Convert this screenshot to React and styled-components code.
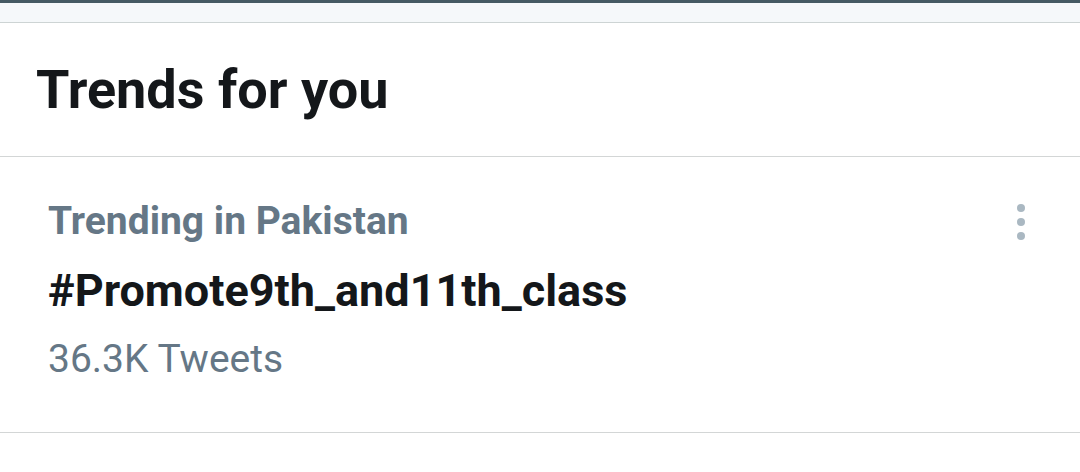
import React from "react";
import styled, { createGlobalStyle } from "styled-components";

const Global = createGlobalStyle`
  html, body { margin: 0; padding: 0; background: #ffffff; }
  body { font-family: Roboto, "Noto Sans", sans-serif; -webkit-font-smoothing: antialiased; }
`;

const Page = styled.div`
  width: 1080px;
  height: 472px;
  background: #ffffff;
  overflow: hidden;
`;

const TopStrip = styled.div`
  height: 19px;
  background: #f5f8fa;
  border-top: 3px solid #455a63;
  border-bottom: 1px solid #cdd4d4;
`;

const Header = styled.div`
  height: 133px;
  display: flex;
  align-items: center;
  padding-left: 36px;
  border-bottom: 1px solid #d3d6d6;
`;

const Title = styled.h2`
  margin: 0;
  font-size: 54px;
  font-weight: 700;
  color: #14171a;
  line-height: 1;
`;

const TrendRow = styled.div`
  height: 275px;
  display: flex;
  justify-content: space-between;
  padding: 0 48px;
  border-bottom: 1px solid #d3d6d6;
`;

const TrendText = styled.div`
  display: flex;
  flex-direction: column;
  padding-top: 42px;
`;

const Context = styled.div`
  font-size: 39px;
  font-weight: 700;
  color: #657786;
  line-height: 44px;
`;

const Hashtag = styled.div`
  margin-top: 13px;
  font-size: 45px;
  font-weight: 700;
  color: #14171a;
  line-height: 70px;
`;

const Count = styled.div`
  margin-top: 11px;
  font-size: 39px;
  font-weight: 400;
  color: #657786;
  line-height: 44px;
`;

const More = styled.button`
  margin-top: 45px;
  width: 24px;
  height: 40px;
  border: 0;
  background: none;
  padding: 0;
  margin-right: -1px;
  display: flex;
  flex-direction: column;
  align-items: center;
  justify-content: center;
  gap: 6px;
`;

const Dot = styled.span`
  width: 8px;
  height: 8px;
  border-radius: 50%;
  background: #aab8c2;
`;

export default function App() {
  return (
    <Page>
      <Global />
      <TopStrip />
      <Header>
        <Title>Trends for you</Title>
      </Header>
      <TrendRow>
        <TrendText>
          <Context>Trending in Pakistan</Context>
          <Hashtag>#Promote9th_and11th_class</Hashtag>
          <Count>36.3K Tweets</Count>
        </TrendText>
        <More aria-label="More">
          <Dot />
          <Dot />
          <Dot />
        </More>
      </TrendRow>
    </Page>
  );
}
